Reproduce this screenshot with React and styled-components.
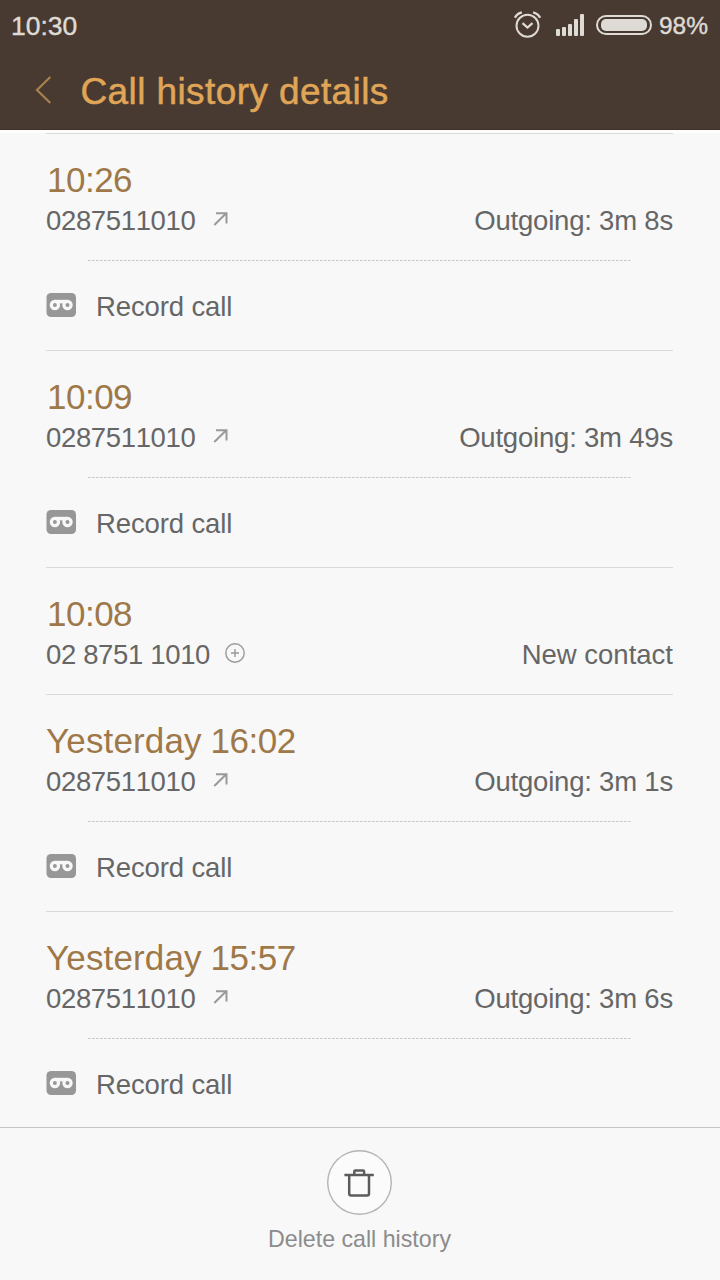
import React from 'react';
import styled, { createGlobalStyle } from 'styled-components';

const GlobalStyle = createGlobalStyle`
  * {
    box-sizing: border-box;
  }
  body {
    margin: 0;
    background: #f8f8f8;
    font-family: "Liberation Sans", Arial, sans-serif;
  }
`;

const Screen = styled.div`
  width: 720px;
  height: 1280px;
  display: flex;
  flex-direction: column;
  overflow: hidden;
  background: #f8f8f8;
`;

const Header = styled.header`
  flex: none;
  height: 130px;
  background: #493a31;
  border-bottom: 1px solid #40322a;
`;

const StatusBar = styled.div`
  height: 52px;
  display: flex;
  align-items: center;
  justify-content: space-between;
  padding: 0 12px 0 11px;
  color: #dedad5;
`;

const Clock = styled.span`
  font-size: 26.5px;
  line-height: 30px;
  -webkit-text-stroke: 0.4px #dedad5;
`;

const StatusIcons = styled.div`
  display: flex;
  align-items: center;
`;

const Indicators = styled.div`
  display: flex;
  align-items: center;
  padding-bottom: 2px;
`;

const Battery = styled.div`
  width: 56px;
  height: 20px;
  margin: 0 7px 0 12px;
  padding: 2px 3px;
  border: 2px solid #dedad5;
  border-radius: 10px;
`;

const BatteryLevel = styled.div`
  height: 12px;
  border-radius: 5px;
  background: #dedad5;
`;

const Percent = styled.span`
  font-size: 24.5px;
  line-height: 30px;
  -webkit-text-stroke: 0.4px #dedad5;
`;

const TitleBar = styled.div`
  height: 77px;
  display: flex;
  align-items: center;
  padding-left: 34px;

  svg {
    margin-bottom: 2px;
  }
`;

const Title = styled.h1`
  margin: 2px 0 0 27.5px;
  font-size: 37px;
  line-height: 44px;
  font-weight: 400;
  letter-spacing: 0.4px;
  color: #e0a658;
  -webkit-text-stroke: 0.5px #e0a658;
`;

const List = styled.main`
  flex: 1;
  min-height: 0;
  overflow: hidden;
  padding: 3px 47px 0 46px;
  box-shadow: inset 0 3px 0 #fdfdfd;
`;

const Item = styled.section`
  height: ${(props) => (props.$short ? '127px' : '217px')};
  border-top: 1px solid #dadada;
  padding-top: 26px;
`;

const Time = styled.div`
  height: 41px;
  font-size: 35px;
  line-height: 40px;
  color: #9e7848;
`;

const Day = styled.span`
  letter-spacing: 0.15px;
`;

const Hour = styled.span`
  margin-left: ${(props) => (props.$afterDay ? '-1px' : '1px')};
  letter-spacing: -0.5px;
`;

const Row = styled.div`
  height: 40px;
  display: flex;
  align-items: center;
  font-size: 27.5px;
  line-height: 40px;
  color: #666;
`;

const PhoneNumber = styled.span`
  font-kerning: none;
  letter-spacing: -0.35px;
`;

const NumberIcon = styled.span`
  display: flex;
  flex: 1;
  padding: 0 0 4px 15px;
`;

const Info = styled.span`
  letter-spacing: ${(props) => (props.$wide ? '0' : '-0.2px')};
`;

const Record = styled.div`
  height: 90px;
  display: flex;
  align-items: center;
  gap: 20px;
  font-size: 27.5px;
  letter-spacing: -0.12px;
  color: #666;

  svg {
    margin-bottom: 2px;
  }

  span {
    padding-top: 2px;
  }
`;

const Dashes = styled.div`
  height: 1px;
  margin: 19px 42px 0;
  background: repeating-linear-gradient(to right, #c8c8c8 0 2px, #dadada 2px 3px, #f4f4f4 3px 4px);
`;

const Footer = styled.footer`
  flex: none;
  height: 153px;
  display: flex;
  flex-direction: column;
  align-items: center;
  padding: 22px 1px 0 0;
  border-top: 1px solid #c6c6c6;
  background: #f8f8f8;
`;

const RoundButton = styled.button`
  width: 65px;
  height: 65px;
  padding: 0;
  display: flex;
  align-items: center;
  justify-content: center;
  border: none;
  border-radius: 50%;
  background: #fbfbfb;
  box-shadow: inset 0 0 0 1.4px #b4b4b4;
`;

const FooterLabel = styled.span`
  margin-top: 10px;
  font-size: 23.2px;
  line-height: 28px;
  color: #8c8c8c;
`;

const AlarmIcon = () => (
  <svg width="28" height="28" viewBox="0.5 0.4 28 28" fill="none" stroke="#dedad5" strokeWidth="2">
    <circle cx="14" cy="15.2" r="11" />
    <path d="M9 12.6l5 4.4 5-4.4" strokeWidth="2.2" />
    <path d="M1.4 7.2Q3.4 3 8.4 1.8M26.6 7.2Q24.6 3 19.6 1.8" strokeWidth="2.4" />
  </svg>
);

const SignalIcon = () => (
  <svg width="42" height="22" viewBox="-14 0 42 22" fill="#dedad5">
    <rect x="0" y="15" width="4" height="7" rx="1" />
    <rect x="6" y="13" width="4" height="9" rx="1" />
    <rect x="12" y="10" width="4" height="12" rx="1" />
    <rect x="18" y="5" width="4" height="17" rx="1" />
    <rect x="24" y="0" width="4" height="22" rx="1" />
  </svg>
);

const BackIcon = () => (
  <svg width="19" height="28" viewBox="0 0 19 28" fill="none" stroke="#a9814c" strokeWidth="2.2">
    <path d="M16.3 1L3 14l13.3 13" />
  </svg>
);

const OutgoingIcon = () => (
  <svg width="18" height="16" viewBox="-0.8 0 18 16" fill="none" stroke="#999" strokeWidth="2">
    <path d="M3.5 14L15.2 2.5M5.2 2.2h10.5v10.3" />
  </svg>
);

const AddIcon = () => (
  <svg width="20" height="20" viewBox="0 0 20 20" fill="none" stroke="#999" strokeWidth="1.4">
    <circle cx="10" cy="10" r="9.2" />
    <path d="M6 10h8M10 6v8" />
  </svg>
);

const TapeIcon = () => (
  <svg width="30" height="24" viewBox="0 0 30 24">
    <rect x="0.5" width="29.5" height="24" rx="4.5" fill="#979797" />
    <g fill="#f8f8f8">
      <circle cx="8.9" cy="12" r="5.2" />
      <circle cx="21.5" cy="12" r="5.2" />
      <rect x="8.9" y="6.8" width="12.6" height="3.6" />
    </g>
    <circle cx="8.9" cy="12" r="2" fill="#979797" />
    <circle cx="21.5" cy="12" r="2" fill="#979797" />
  </svg>
);

const TrashIcon = () => (
  <svg width="30" height="28" viewBox="1 0 30 28" overflow="visible" fill="none" stroke="#5c5c5c" strokeWidth="2.5">
    <path d="M0.4 5.9h29.4M10.3 6V2.4q0-1 1-1h7.8q1 0 1 1V6" />
    <path d="M5.2 6v18.4q0 2 2 2h15.8q2 0 2-2V6" />
  </svg>
);

const calls = [
  { time: '10:26', number: '0287511010', info: 'Outgoing: 3m 8s' },
  { time: '10:09', number: '0287511010', info: 'Outgoing: 3m 49s' },
  { time: '10:08', number: '02 8751 1010', info: 'New contact', contact: true },
  { day: 'Yesterday', time: '16:02', number: '0287511010', info: 'Outgoing: 3m 1s' },
  { day: 'Yesterday', time: '15:57', number: '0287511010', info: 'Outgoing: 3m 6s' },
];

const Call = ({ call }) => (
  <Item $short={call.contact}>
    <Time>
      {call.day && <Day>{call.day} </Day>}
      <Hour $afterDay={call.day}>{call.time}</Hour>
    </Time>
    <Row>
      <PhoneNumber>{call.number}</PhoneNumber>
      <NumberIcon>{call.contact ? <AddIcon /> : <OutgoingIcon />}</NumberIcon>
      <Info $wide={call.contact}>{call.info}</Info>
    </Row>
    {!call.contact && (
      <>
        <Dashes />
        <Record>
          <TapeIcon />
          <span>Record call</span>
        </Record>
      </>
    )}
  </Item>
);

const App = () => {
  return (
    <>
      <GlobalStyle />
      <Screen>
        <Header>
          <StatusBar>
            <Clock>10:30</Clock>
            <StatusIcons>
              <Indicators>
                <AlarmIcon />
                <SignalIcon />
                <Battery>
                  <BatteryLevel />
                </Battery>
              </Indicators>
              <Percent>98%</Percent>
            </StatusIcons>
          </StatusBar>
          <TitleBar>
            <BackIcon />
            <Title>Call history details</Title>
          </TitleBar>
        </Header>
        <List>
          {calls.map((call) => (
            <Call key={call.time} call={call} />
          ))}
        </List>
        <Footer>
          <RoundButton>
            <TrashIcon />
          </RoundButton>
          <FooterLabel>Delete call history</FooterLabel>
        </Footer>
      </Screen>
    </>
  );
};

export default App;
